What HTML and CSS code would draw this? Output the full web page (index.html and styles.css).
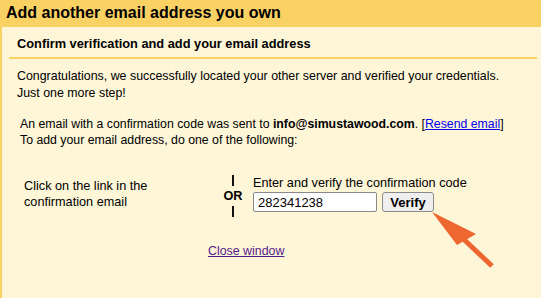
FILE: index.html
```html
<!DOCTYPE html>
<html>
<head>
<meta charset="utf-8">
<link rel="stylesheet" href="styles.css">
</head>
<body>
<div class="frame">
  <div class="title">Add another email address you own</div>
  <div class="panel">
    <div class="sub">Confirm verification and add your email address</div>
    <div class="rule"></div>
    <p class="intro">Congratulations, we successfully located your other server and verified your credentials.<br>Just one more step!</p>
    <p class="sent">An email with a confirmation code was sent to <b>info@simustawood.com</b>. [<a href="#" class="link">Resend email</a>]<br>To add your email address, do one of the following:</p>
    <div class="choices">
      <div class="choice-left">Click on the link in the<br>confirmation email</div>
      <div class="or">
        <span class="bar"></span>
        <span class="or-text">OR</span>
        <span class="bar"></span>
      </div>
      <div class="choice-right">
        <div class="code-label">Enter and verify the confirmation code</div>
        <div class="code-row">
          <input class="code-input" type="text" value="282341238">
          <button class="verify">Verify</button>
        </div>
      </div>
    </div>
    <div class="close-row"><a href="#" class="close">Close window</a></div>
  </div>
  <svg class="arrow" width="80" height="70" viewBox="0 0 80 70">
    <line x1="24" y1="20" x2="60" y2="54" stroke="#ee6630" stroke-width="5" stroke-linecap="butt"/>
    <polygon points="0,0 25,33 44,22" fill="#ee6630"/>
  </svg>
</div>
</body>
</html>
```
FILE: styles.css
```css
html, body {
  margin: 0;
  padding: 0;
  background: #fff6d8;
}
body {
  font-family: "Liberation Sans", Arial, sans-serif;
  font-size: 12.4px;
  color: #000;
  width: 541px;
  height: 298px;
  overflow: hidden;
}
.frame {
  position: relative;
  border-left: 2px solid #fad163;
  height: 298px;
  box-sizing: border-box;
}
.title {
  background: #fad163;
  height: 27px;
  line-height: 26px;
  padding-left: 4px;
  font-weight: bold;
  font-size: 16px;
}
.sub {
  font-weight: bold;
  font-size: 12.8px;
  padding: 9px 0 0 15px;
  line-height: 16px;
  height: 21px;
}
.rule {
  height: 2px;
  background: #fad163;
  margin: 0 4px 0 7px;
}
.intro {
  margin: 9px 0 0 15px;
  line-height: 17px;
}
.sent {
  margin: 14px 0 0 18px;
  line-height: 16px;
  font-size: 12.3px;
}
.link {
  color: #0000ee;
}
.choices {
  display: flex;
  align-items: center;
  margin-top: 27px;
  font-size: 12.7px;
}
.choice-left {
  width: 199px;
  padding-left: 22px;
  line-height: 16px;
  margin-top: -5px;
}
.or {
  display: flex;
  flex-direction: column;
  align-items: center;
  width: 20px;
}
.bar {
  width: 2px;
  height: 11px;
  background: #111;
}
.or-text {
  font-weight: bold;
  line-height: 20px;
}
.choice-right {
  margin-left: 10px;
  margin-top: -4px;
}
.code-label {
  line-height: 14px;
}
.code-row {
  display: flex;
  gap: 5px;
  margin-top: 2px;
}
.code-input {
  width: 124px;
  height: 20px;
  box-sizing: border-box;
  border: 1px solid #8a8a8a;
  border-radius: 2px;
  font-family: "Liberation Sans", Arial, sans-serif;
  font-size: 13px;
  padding: 0 4px;
  margin: 0;
  background: #fff;
}
.verify {
  width: 52px;
  height: 20px;
  box-sizing: border-box;
  border: 1px solid #8a8a8a;
  border-radius: 3px;
  background: #efefef;
  font-family: "Liberation Sans", Arial, sans-serif;
  font-weight: bold;
  font-size: 13px;
  padding: 0;
  margin: 0;
}
.close-row {
  margin: 27px 0 0 206px;
}
.close {
  color: #551a8b;
}
.arrow {
  position: absolute;
  left: 430px;
  top: 212px;
}
```
